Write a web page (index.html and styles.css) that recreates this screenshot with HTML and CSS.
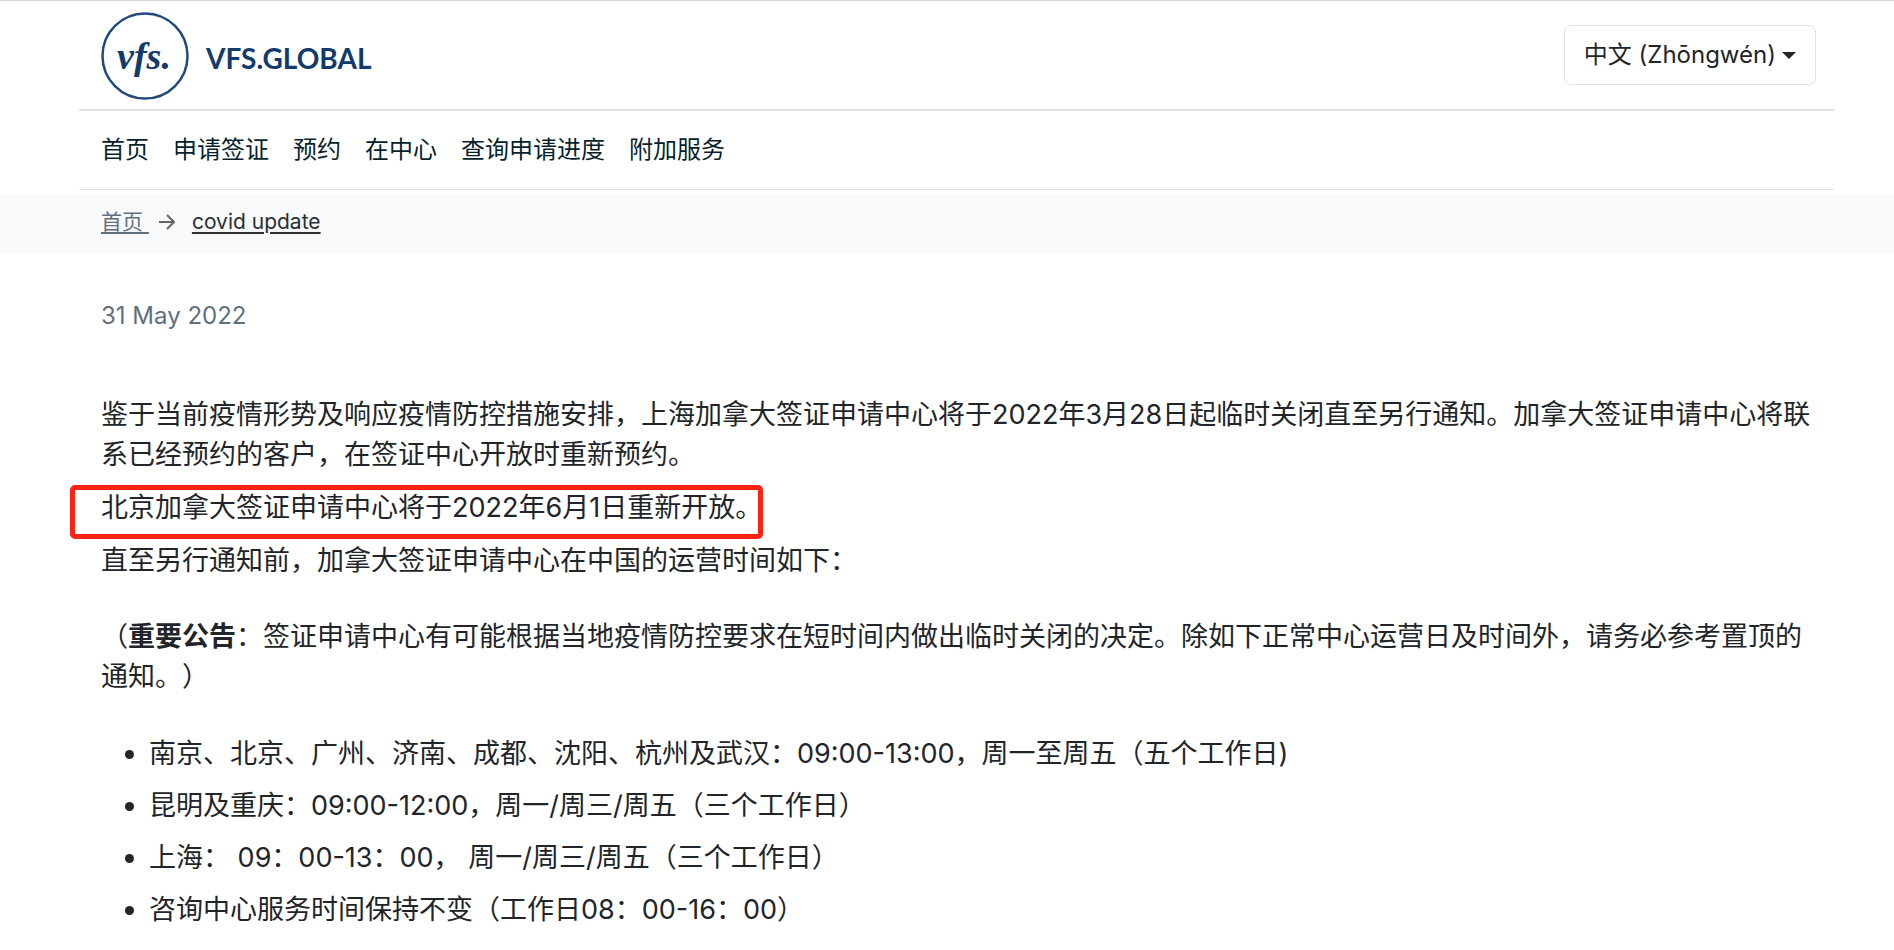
FILE: index.html
```html
<!DOCTYPE html>
<html lang="zh-CN">
<head>
<meta charset="utf-8">
<meta name="viewport" content="width=device-width, initial-scale=1">
<title>VFS.GLOBAL</title>
<link rel="stylesheet" href="styles.css">
</head>
<body>
<header class="site-header">
  <div class="brand-bar">
    <a class="brand" href="#">
      <svg class="brand-mark" viewBox="0 0 88 88" aria-hidden="true">
        <circle cx="44" cy="44" r="42.5"/>
        <text x="43" y="57" text-anchor="middle">vfs.</text>
      </svg>
      <span class="brand-name">VFS.GLOBAL</span>
    </a>
    <button class="language" type="button" aria-haspopup="true">中文 (Zhōngwén)<span class="caret"></span></button>
  </div>
  <nav class="main-nav">
    <a href="#">首页</a>
    <a href="#">申请签证</a>
    <a href="#">预约</a>
    <a href="#">在中心</a>
    <a href="#">查询申请进度</a>
    <a href="#">附加服务</a>
  </nav>
</header>

<nav class="breadcrumb" aria-label="breadcrumb">
  <a class="crumb" href="#">首页&nbsp;</a>
  <svg class="crumb-arrow" viewBox="0 0 16 18" aria-hidden="true"><path d="M0 9H15M8 2l7 7-7 7"/></svg>
  <a class="crumb crumb-current" href="#">covid update</a>
</nav>

<main class="article">
  <p class="date">31 May 2022</p>
  <div class="notice">
    <p>鉴于当前疫情形势及响应疫情防控措施安排，上海加拿大签证申请中心将于2022年3月28日起临时关闭直至另行通知。加拿大签证申请中心将联系已经预约的客户，在签证中心开放时重新预约。</p>
    <p class="marked">北京加拿大签证申请中心将于2022年6月1日重新开放。</p>
    <p>直至另行通知前，加拿大签证申请中心在中国的运营时间如下：</p>
  </div>
  <p class="important">（<strong>重要公告</strong>：签证申请中心有可能根据当地疫情防控要求在短时间内做出临时关闭的决定。除如下正常中心运营日及时间外，请务必参考置顶的通知。）</p>
  <ul class="hours">
    <li>南京、北京、广州、济南、成都、沈阳、杭州及武汉：09:00-13:00，周一至周五（五个工作日)</li>
    <li>昆明及重庆：09:00-12:00，周一/周三/周五（三个工作日）</li>
    <li>上海： 09：00-13：00， 周一/周三/周五（三个工作日）</li>
    <li>咨询中心服务时间保持不变（工作日08：00-16：00）</li>
  </ul>
</main>
</body>
</html>
```

FILE: styles.css
```css
* { box-sizing: border-box; }

body {
  margin: 0;
  border-top: 1px solid #d9d9d9;
  background: #fff;
  color: #212529;
  font-family: Inter, "Noto Sans CJK SC", sans-serif;
  font-size: 27px;
  line-height: 40px;
  text-spacing-trim: space-all;
}

p, ul { margin: 0; }

.site-header { padding: 0 60px 0 79px; }

.brand-bar {
  display: flex;
  align-items: center;
  justify-content: space-between;
  padding: 11px 18px 9px 22px;
  border-bottom: 2px solid #dee2e6;
}

.brand {
  display: flex;
  align-items: center;
  gap: 17px;
  color: #123b6b;
  text-decoration: none;
}

.brand-mark { width: 88px; height: 88px; }
.brand-mark circle { fill: none; stroke: #22497a; stroke-width: 2.5; }
.brand-mark text {
  fill: #123b6b;
  font: italic bold 38px "Liberation Serif", serif;
}

.brand-name {
  padding-top: 3px;
  font: 700 28px/40px Lato, sans-serif;
}

.language {
  display: flex;
  align-items: center;
  gap: 6px;
  height: 60px;
  margin-bottom: 2px;
  padding: 0 19px;
  border: 1px solid #dee2e6;
  border-radius: 7px;
  background: #fff;
  color: #212529;
  font: inherit;
  font-size: 24px;
}

.caret {
  border: 7px solid transparent;
  border-top-color: #212529;
  border-bottom: 0;
}

.main-nav {
  display: flex;
  gap: 24px;
  padding: 21px 22px;
  border-bottom: 1px solid #dee2e6;
  font-size: 24px;
  line-height: 36px;
}

.main-nav a { color: #061f2d; text-decoration: none; }

.breadcrumb {
  display: flex;
  align-items: center;
  gap: 10px;
  margin-top: 5px;
  padding: 11px 101px 16px;
  background: #f8f9fb;
  font-size: 21px;
  line-height: 32px;
}

.crumb {
  color: #5f6f7e;
  text-decoration-thickness: 2px;
  text-underline-offset: 3px;
}

.crumb-current { margin-left: 7px; color: #2b2f33; }

.crumb-arrow { width: 16px; height: 18px; fill: none; stroke: #666; stroke-width: 2; }

.article { padding: 44px 82px 20px 101px; }

.date {
  margin-bottom: 61px;
  color: #5f6f7e;
  font-size: 24px;
  line-height: 36px;
}

.notice {
  display: flex;
  flex-direction: column;
  align-items: flex-start;
  gap: 13px;
}

.marked { position: relative; }
.marked::after {
  content: "";
  position: absolute;
  inset: -3px -1px -11px -31px;
  border: 5px solid #ff2213;
  border-radius: 5px;
}

.important { margin-top: 36px; }

.hours {
  display: grid;
  gap: 12px;
  margin-top: 37px;
  padding-left: 48px;
}
```
